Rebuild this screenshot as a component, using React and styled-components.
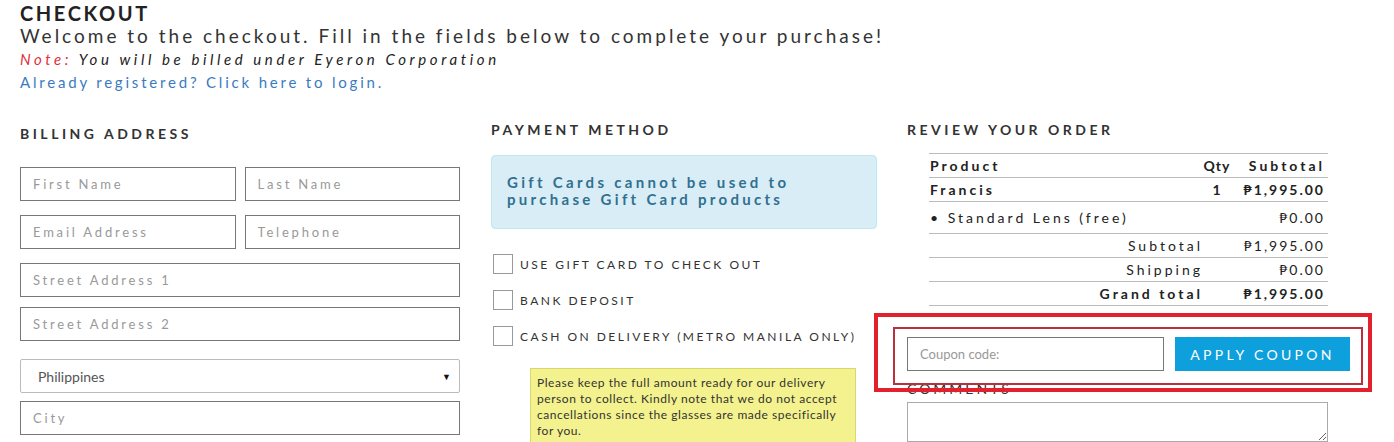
import React from 'react';
import styled, { createGlobalStyle } from 'styled-components';

const GlobalStyle = createGlobalStyle`
  body {
    margin: 0;
    background: #fff;
    font-family: Lato, "Open Sans", sans-serif;
    color: #333;
  }
  * { box-sizing: border-box; }
`;

const orderRows = [
  { name: 'Francis', qty: '1', total: '₱1,995.00', strong: true },
  { name: '• Standard Lens (free)', qty: '', total: '₱0.00', tall: true },
];

const totals = [
  { label: 'Subtotal', value: '₱1,995.00' },
  { label: 'Shipping', value: '₱0.00' },
  { label: 'Grand total', value: '₱1,995.00', strong: true },
];

function App() {
  return (
    <Page>
      <GlobalStyle />
      <Header>
        <Title>CHECKOUT</Title>
        <Welcome>Welcome to the checkout. Fill in the fields below to complete your purchase!</Welcome>
        <Note><span>Note:</span> You will be billed under Eyeron Corporation</Note>
        <LoginLink>Already registered? Click here to login.</LoginLink>
      </Header>

      <Columns>
        <Column>
          <SectionTitle $offset={4}>BILLING ADDRESS</SectionTitle>
          <Fields>
            <Pair>
              <Field placeholder="First Name" />
              <Field placeholder="Last Name" />
            </Pair>
            <Pair>
              <Field placeholder="Email Address" />
              <Field placeholder="Telephone" />
            </Pair>
            <Field placeholder="Street Address 1" />
            <Field placeholder="Street Address 2" />
            <Select>
              <span>Philippines</span>
              <Caret>▼</Caret>
            </Select>
            <Field placeholder="City" />
          </Fields>
        </Column>

        <Column>
          <SectionTitle>PAYMENT METHOD</SectionTitle>
          <InfoBox>Gift Cards cannot be used to purchase Gift Card products</InfoBox>
          <Options>
            <Option><Box />USE GIFT CARD TO CHECK OUT</Option>
            <Option><Box />BANK DEPOSIT</Option>
            <Option><Box />CASH ON DELIVERY (METRO MANILA ONLY)</Option>
          </Options>
          <Warning>
            Please keep the full amount ready for our delivery person to collect. Kindly note that we do not accept
            cancellations since the glasses are made specifically for you.
          </Warning>
        </Column>

        <Column>
          <SectionTitle>REVIEW YOUR ORDER</SectionTitle>
          <OrderTable>
            <OrderRow $strong>
              <NameCell>Product</NameCell>
              <QtyCell>Qty</QtyCell>
              <TotalCell $head>Subtotal</TotalCell>
            </OrderRow>
            {orderRows.map((r) => (
              <OrderRow key={r.name} $strong={r.strong} $tall={r.tall}>
                <NameCell>{r.name}</NameCell>
                <QtyCell>{r.qty}</QtyCell>
                <TotalCell>{r.total}</TotalCell>
              </OrderRow>
            ))}
            {totals.map((t) => (
              <OrderRow key={t.label} $strong={t.strong}>
                <LabelCell>{t.label}</LabelCell>
                <TotalCell>{t.value}</TotalCell>
              </OrderRow>
            ))}
          </OrderTable>
          <CouponArea>
            <Highlight />
            <CouponInput placeholder="Coupon code:" />
            <CouponButton>APPLY COUPON</CouponButton>
          </CouponArea>
          <CommentsLabel>COMMENTS</CommentsLabel>
          <Comments />
        </Column>
      </Columns>
    </Page>
  );
}

const Page = styled.div`
  padding: 0 20px;
  height: 442px;
  overflow: hidden;
`;

const Header = styled.div`
  display: flex;
  flex-direction: column;
`;

const Title = styled.h1`
  margin: 0;
  padding-top: 1px;
  font-size: 20px;
  line-height: 24px;
  font-weight: 700;
  letter-spacing: 2.6px;
  color: #222;
`;

const Welcome = styled.div`
  font-size: 19px;
  line-height: 22px;
  font-weight: 400;
  letter-spacing: 3px;
  color: #333;
`;

const Note = styled.div`
  margin-top: 3px;
  font-size: 15px;
  line-height: 19px;
  font-style: italic;
  letter-spacing: 3.6px;
  color: #222;
  span { color: #e0303a; }
`;

const LoginLink = styled.a`
  margin-top: 3px;
  font-size: 15px;
  line-height: 20px;
  letter-spacing: 2.8px;
  color: #3a7bbf;
  cursor: pointer;
`;

const Columns = styled.div`
  display: grid;
  grid-template-columns: 441px 386px 443px;
  column-gap: 30px;
  margin-top: 29px;
`;

const Column = styled.div`
  display: flex;
  flex-direction: column;
  position: relative;
`;

const SectionTitle = styled.h2`
  margin: ${(p) => p.$offset || 0}px 0 0;
  font-size: 14px;
  line-height: 18px;
  font-weight: 700;
  letter-spacing: 3.5px;
  color: #333;
`;

const Fields = styled.div`
  display: flex;
  flex-direction: column;
  gap: 10px;
  margin-top: 24px;
  width: 440px;
`;

const Pair = styled.div`
  display: grid;
  grid-template-columns: 1fr 1fr;
  gap: 9px;
  margin-bottom: 4px;
`;

const Field = styled.input`
  height: 34px;
  width: 100%;
  border: 1px solid #777;
  padding: 0 12px;
  font-family: Lato, sans-serif;
  font-size: 13px;
  letter-spacing: 2.8px;
  &::placeholder { color: #999; }
`;

const Select = styled.div`
  height: 34px;
  margin: 8px 0 -2px;
  border: 1px solid #bbb;
  border-radius: 2px;
  display: flex;
  align-items: center;
  justify-content: space-between;
  padding: 0 8px 0 17px;
  font-size: 14px;
  color: #555;
`;

const Caret = styled.span`
  font-size: 9px;
  color: #111;
`;

const InfoBox = styled.div`
  margin-top: 16px;
  height: 74px;
  padding: 18px 15px 0;
  background: #d9edf7;
  border: 1px solid #bce8f1;
  border-radius: 4px;
  font-size: 15px;
  line-height: 17px;
  font-weight: 700;
  letter-spacing: 3.3px;
  color: #31708f;
`;

const Options = styled.div`
  display: flex;
  flex-direction: column;
  gap: 16px;
  margin-top: 25px;
`;

const Option = styled.label`
  display: flex;
  align-items: center;
  gap: 7px;
  margin-left: 2px;
  font-size: 12px;
  letter-spacing: 2.5px;
  color: #333;
`;

const Box = styled.span`
  width: 20px;
  height: 20px;
  border: 1px solid #999;
  flex: none;
`;

const Warning = styled.div`
  margin: 22px 21px 0 39px;
  padding: 6px 6px 6px;
  background: #f3f28e;
  border: 1px solid #d9d86a;
  font-size: 12px;
  line-height: 16px;
  letter-spacing: 0.55px;
  color: #333;
`;

const OrderTable = styled.div`
  margin: 14px 22px 0 22px;
  border-top: 1px solid #bbb;
`;

const OrderRow = styled.div`
  display: flex;
  align-items: center;
  height: ${(p) => (p.$tall ? 32 : 24)}px;
  border-bottom: 1px solid #bbb;
  padding: 0 3px 0 1px;
  font-size: 14px;
  letter-spacing: 3px;
  font-weight: ${(p) => (p.$strong ? 700 : 400)};
  color: #222;
`;

const NameCell = styled.span`
  flex: 1;
`;

const QtyCell = styled.span`
  width: 44px;
  text-align: center;
  letter-spacing: 1px;
`;

const LabelCell = styled.span`
  flex: 1;
  text-align: right;
  padding-right: 36px;
`;

const TotalCell = styled.span`
  width: 86px;
  text-align: right;
  white-space: nowrap;
  letter-spacing: ${(p) => (p.$head ? 3 : 2)}px;
`;

const CouponArea = styled.div`
  position: relative;
  display: flex;
  gap: 11px;
  margin-top: 31px;
`;

const Highlight = styled.div`
  position: absolute;
  left: -33px;
  top: -24px;
  width: 498px;
  height: 79px;
  border: 4px solid #e3212c;
  pointer-events: none;
  &::after {
    content: '';
    position: absolute;
    left: 15px;
    top: 10px;
    width: 466px;
    height: 54px;
    border: 2px solid #b9323b;
  }
`;

const CouponInput = styled.input`
  width: 257px;
  height: 34px;
  border: 1px solid #777;
  padding: 0 12px;
  font-family: Lato, sans-serif;
  font-size: 13px;
  &::placeholder { color: #999; }
`;

const CouponButton = styled.button`
  width: 175px;
  height: 34px;
  border: none;
  background: #0ea0dc;
  color: #fff;
  font-family: Lato, sans-serif;
  font-size: 14px;
  letter-spacing: 3.3px;
`;

const CommentsLabel = styled.div`
  margin-top: 9px;
  font-size: 14px;
  line-height: 18px;
  letter-spacing: 3px;
  color: #333;
`;

const Comments = styled.textarea`
  margin-top: 4px;
  width: 421px;
  height: 40px;
  border: 1px solid #aaa;
  resize: both;
`;

export default App;
